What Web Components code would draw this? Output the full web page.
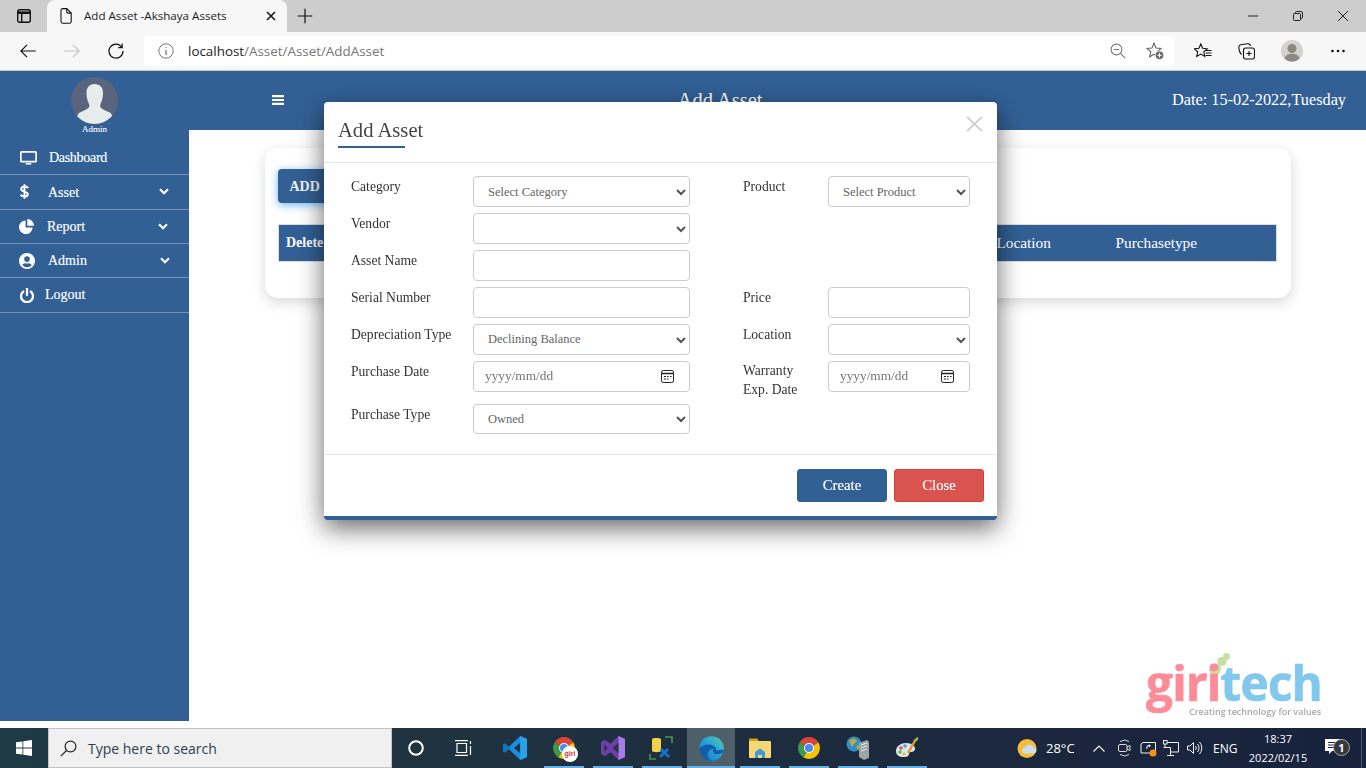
<!DOCTYPE html>
<html lang="en"><head><meta charset="utf-8"><title>Add Asset -Akshaya Assets</title>
<style>
html,body{margin:0;padding:0;height:768px;overflow:hidden;background:#fff}
body{display:flex;flex-direction:column;width:1366px}
</style></head>
<body>
<browser-chrome></browser-chrome>
<asset-app>
  <asset-modal></asset-modal>
</asset-app>
<win-taskbar></win-taskbar>
<giri-logo></giri-logo>
<script>
const def=(name,html)=>customElements.define(name,class extends HTMLElement{
  constructor(){super();this.attachShadow({mode:'open'}).innerHTML=typeof html==='function'?html(this):html;}
});
const BLUE='#326095';

def('browser-chrome',`<style>
:host{display:block;height:71px;font-family:"Open Sans","Noto Sans",sans-serif;color:#222;flex:none}
svg{display:block;flex:none}
.strip{height:32px;background:#cdcdcd;display:flex;align-items:flex-end}
.sb{margin-left:16px;width:16px;margin-right:15px;align-self:center}
.tab{width:240px;height:32px;background:#f7f7f7;border-radius:8px 8px 0 0;display:flex;align-items:center;box-sizing:border-box;padding-left:13px}
.tab .t{margin-left:12px;font-size:11.6px;width:182px;white-space:nowrap;color:#1b1b1b;margin-top:-1px}
.plus{margin-left:10px;align-self:center}
.win{margin-left:auto;display:flex;align-self:center;padding-right:18px;gap:35px}
.bar{height:38px;background:#f7f7f7;border-bottom:1px solid #c9c9c9;display:flex;align-items:center;position:relative}
.addr{position:absolute;left:144px;top:4px;width:1030px;height:30px;background:#fff;border-radius:4px;display:flex;align-items:center}
.url{font-size:13.4px;margin-left:14px;color:#767676;white-space:nowrap}
.url b{font-weight:400;color:#222}
.nav{display:flex;align-items:center;margin-left:20px;gap:28px}
.r{position:absolute;left:1194px;top:0;height:38px;display:flex;align-items:center}
</style>
<div class="strip">
 <svg class="sb" width="16" height="16" viewBox="0 0 16 16" fill="none" stroke="#111" stroke-width="1.4"><rect x="1.7" y="1.7" width="12.6" height="12.6" rx="2"/><path d="M2 4.7h12" stroke-width="2.6"/><path d="M5.7 5v9"/></svg>
 <div class="tab">
  <svg width="12" height="16" viewBox="0 0 12 16" fill="none" stroke="#111" stroke-width="1.1"><path d="M1 2.2a1.6 1.6 0 0 1 1.6-1.6h4.2L11.2 5v8.6a1.6 1.6 0 0 1-1.6 1.6h-7A1.6 1.6 0 0 1 1 13.6zM6.7.8v3a1.3 1.3 0 0 0 1.3 1.3h3"/></svg>
  <span class="t">Add Asset -Akshaya Assets</span>
  <svg width="10" height="10" viewBox="0 0 10 10" stroke="#111" stroke-width="1.5"><path d="M1 1l8 8M9 1l-8 8"/></svg>
 </div>
 <svg class="plus" width="16" height="16" viewBox="0 0 16 16" stroke="#111" stroke-width="1.2"><path d="M8 .8v14.4M.8 8h14.4"/></svg>
 <div class="win">
  <svg width="10" height="10" viewBox="0 0 10 10" stroke="#222"><path d="M0 5h10"/></svg>
  <svg width="10" height="10" viewBox="0 0 10 10" fill="none" stroke="#222"><rect x=".5" y="2.5" width="7" height="7" rx="1.2"/><path d="M2.5 2.3V1.6A1.1 1.1 0 0 1 3.6.5h4.3a1.6 1.6 0 0 1 1.6 1.6v4.3a1.1 1.1 0 0 1-1.1 1.1h-.6"/></svg>
  <svg width="10" height="10" viewBox="0 0 10 10" stroke="#222"><path d="M0 0l10 10M10 0L0 10"/></svg>
 </div>
</div>
<div class="bar">
 <div class="nav">
  <svg width="16" height="14" viewBox="0 0 16 14" fill="none" stroke="#111" stroke-width="1.2"><path d="M.8 7h15M7 .8L.8 7 7 13.2"/></svg>
  <svg width="16" height="14" viewBox="0 0 16 14" fill="none" stroke="#c4c4c4" stroke-width="1.2"><path d="M0 7h15.2M9 .8L15.2 7 9 13.2"/></svg>
  <svg width="16" height="16" viewBox="0 0 16 16" fill="none" stroke="#111" stroke-width="1.2"><path d="M13.8 4.2A7 7 0 1 0 15 8"/><path d="M14.2 .6v4h-4"/></svg>
 </div>
 <div class="addr">
  <svg style="margin-left:14px" width="16" height="16" viewBox="0 0 16 16" fill="none" stroke="#777"><circle cx="8" cy="8" r="7.2"/><path d="M8 7v5" stroke-width="1.3"/><circle cx="8" cy="4.6" r=".7" fill="#777" stroke="none"/></svg>
  <span class="url"><b>localhost</b>/Asset/Asset/AddAsset</span>
  <svg style="position:absolute;left:966px" width="16" height="16" viewBox="0 0 16 16" fill="none" stroke="#777" stroke-width="1.1"><circle cx="6.5" cy="6.5" r="5.4"/><path d="M3.8 6.5h5.4M10.4 10.4l4.8 4.8"/></svg>
  <svg style="position:absolute;left:1002px" width="18" height="18" viewBox="0 0 18 18" fill="none" stroke="#666" stroke-width="1.1"><path d="M8 1.200L10 6l5 .5-3.800 3.300 1.200 5L8 12.200l-4.400 2.600 1.200-5L1 6.500 6 6z"/><circle cx="13.500" cy="13.300" r="4.300" fill="#666" stroke="#f7f7f7" stroke-width=".8"/><path d="M13.500 11v4.600M11.200 13.300h4.600" stroke="#fff" stroke-width="1.100"/></svg>
 </div>
 <div class="r">
  <svg width="18" height="16" viewBox="0 0 18 16" fill="none" stroke="#111" stroke-width="1.1"><path d="M6.800 1l1.900 4.300 4.500.5-3.400 3 1 4.700-4-2.400-4.100 2.400 1-4.700L.4 5.800l4.500-.5z"/><path d="M11.500 7.500h6M11.800 10h5.700M11.500 12.500h6" stroke-width="1"/></svg>
  <svg style="margin-left:26px" width="17" height="17" viewBox="0 0 17 17" fill="none" stroke="#111" stroke-width="1.1"><rect x="5.500" y="5" width="11" height="11" rx="2.200"/><path d="M11 8v5M8.500 10.500h5"/><path d="M3.500 11.500C2 10 .8 6.500.8 4.500A3 3 0 0 1 3.800 1.500l6-.7a2.500 2.500 0 0 1 2.700 2.200"/></svg>
  <svg style="margin-left:26px" width="22" height="22" viewBox="0 0 22 22"><circle cx="11" cy="11" r="11" fill="#d4d2ce"/><circle cx="11" cy="8.500" r="4.500" fill="#8b8984"/><path d="M3.500 18.500C4.500 15 7.500 13.800 11 13.800s6.500 1.200 7.500 4.700A11 11 0 0 1 3.500 18.500z" fill="#8b8984"/></svg>
  <svg style="margin-left:28px" width="14" height="4" viewBox="0 0 14 4" fill="#111"><circle cx="1.500" cy="2" r="1.300"/><circle cx="7" cy="2" r="1.300"/><circle cx="12.500" cy="2" r="1.300"/></svg>
 </div>
</div>`);

const chev=c=>`<svg width="10" height="7" viewBox="0 0 10 7" fill="none" stroke="${c}" stroke-width="2.100"><path d="M1 1.200l4 4 4-4"/></svg>`;

def('nav-item',h=>`<style>
:host{display:flex;align-items:center;height:33.4px;border-bottom:1px solid rgba(255,255,255,.33);color:#fff;font:14px/1 "Liberation Serif",serif;position:relative;-webkit-text-stroke:.15px #fff}
.ic{display:flex;width:var(--ic,48px);padding-left:var(--il,20px);box-sizing:border-box}
.ch{margin-left:auto;margin-right:var(--cr,20px);display:flex}
.tx{padding-top:var(--tp,0)}
svg{display:block}
</style><span class="ic"><slot name="icon"></slot></span><span class="tx"><slot></slot></span>${h.hasAttribute('chev')?`<span class="ch">${chev('#fff')}</span>`:''}`);

def('app-sidebar',`<style>
:host{display:block;width:189px;background:${BLUE};flex:none;color:#fff;font-family:"Liberation Serif",serif}
.top{height:69.800px;display:flex;flex-direction:column;align-items:center;padding-top:6px;box-sizing:border-box}
.av{width:47px;height:47px;border-radius:50%;background:#59647f;overflow:hidden;border:0;display:block}
.nm{font-size:9px;line-height:10px;-webkit-text-stroke:.1px #fff}
</style>
<div class="top">
<svg class="av" viewBox="0 0 47 47"><path d="M23.500 7c5.800 0 8.500 3.600 8.500 9 0 3-.4 5-1 7-.6 2.400-1.800 3.800-1.800 6 0 2.600 4.500 4.300 8 5.700 3 1.200 4.300 3.700 4.300 6.300v6H6v-6c0-2.600 1.300-5.100 4.300-6.300 3.500-1.400 8-3.100 8-5.700 0-2.200-1.200-3.600-1.800-6-.6-2-1-4-1-7 0-5.400 2.700-9 8-9z" fill="#e7ecec"/></svg>
<span class="nm">Admin</span></div>
<slot></slot>`);

def('app-header',`<style>
:host{display:flex;align-items:center;height:59px;background:${BLUE};color:#fff;font-family:"Liberation Serif",serif;padding:0 20px 1px 83px;box-sizing:border-box;justify-content:space-between;flex:none}
svg{display:block}
.t{font-size:20.5px;margin-right:16px}
.d{font-size:16.3px}
</style>
<svg width="12" height="10" viewBox="0 0 12 10" fill="#fff"><rect width="12" height="2.200" rx=".5"/><rect y="3.900" width="12" height="2.200" rx=".5"/><rect y="7.800" width="12" height="2.200" rx=".5"/></svg>
<span class="t">Add Asset</span><span class="d">Date: 15-02-2022,Tuesday</span>`);

def('asset-card',`<style>
:host{display:block;margin:18px 75px 0 76px;height:150px;background:#fff;border-radius:13px;box-shadow:0 4px 14px rgba(0,0,0,.16);padding:21px 14px 0 13px;box-sizing:border-box;font-family:"Liberation Serif",serif}
button{display:block;width:130px;height:34px;background:${BLUE};color:#f2f2f2;border:0;border-radius:4px;font:600 14px "Liberation Serif",serif;text-align:left;padding:2px 0 0 11.500px;box-shadow:0 2px 9px rgba(60,160,240,.75)}
table{margin-top:21px;width:999px;height:38px;border-collapse:collapse;table-layout:fixed;border:1px solid #dcdcdc;background:${BLUE};color:#fff}
th{font:400 15.300px "Liberation Serif",serif;text-align:left;padding:0 7px;white-space:nowrap}
th.b{font-weight:700;font-size:14px}
</style>
<button>ADD</button>
<table><colgroup><col style="width:718px"><col style="width:119px"><col></colgroup>
<tr><th class="b">Delete</th><th style="padding-left:0">Location</th><th style="padding-left:0">Purchasetype</th></tr></table>`);

def('asset-app',`<style>
:host{display:flex;height:650px;flex:none;background:#fff}
.main{flex:1;display:flex;flex-direction:column;min-width:0}
.da{letter-spacing:-.3px}
</style>
<app-sidebar>
 <nav-item style="--ic:49px;--tp:1.500px"><svg slot="icon" width="17" height="15" viewBox="0 0 17 15" fill="#fff"><path d="M1.500 1h14A1.500 1.500 0 0 1 17 2.500v8.500a1.500 1.500 0 0 1-1.500 1.500h-14A1.500 1.500 0 0 1 0 11V2.500A1.500 1.500 0 0 1 1.500 1zm.2 1.700v8h13.600v-8zM6 13h5l.6 1.600H5.400z"/></svg><span class="da">Dashboard</span></nav-item>
 <nav-item chev style="--tp:1.500px"><svg slot="icon" width="9" height="15" viewBox="0 0 9 15" fill="none" stroke="#fff" stroke-width="2"><path d="M8 4.200C7.500 3 6.200 2.600 4.500 2.600 2.600 2.600 1.200 3.500 1.200 5c0 3.400 6.600 1.800 6.600 5.200 0 1.500-1.400 2.300-3.300 2.300-1.800 0-3.200-.6-3.800-1.900M4.500.3v14.400"/></svg>Asset</nav-item>
 <nav-item chev style="--ic:47px;--il:19px;--cr:21px;--tp:1.500px"><svg slot="icon" width="15" height="15" viewBox="0 0 15 15" fill="#fff"><path d="M6.600 1.500v7h7A6.800 6.800 0 1 1 6.600 1.500z"/><path d="M8.300 0a6.800 6.800 0 0 1 6.700 6.800H8.300z"/></svg>Report</nav-item>
 <nav-item chev style="--ic:48px;--il:19px;--cr:19.500px"><svg slot="icon" width="16" height="16" viewBox="0 0 16 16"><path fill="#fff" fill-rule="evenodd" d="M8 0a8 8 0 1 1 0 16A8 8 0 0 1 8 0zm0 3.300a2.800 2.800 0 1 0 0 5.600 2.800 2.800 0 0 0 0-5.600zM3.400 12.300A5.900 5.900 0 0 0 8 14.300a5.900 5.900 0 0 0 4.600-2c-.4-1.100-1.500-2-2.700-2-.6 0-1 .3-1.900.3s-1.300-.3-1.900-.3c-1.200 0-2.300.9-2.700 2z"/></svg>Admin</nav-item>
 <nav-item style="--ic:45px"><svg slot="icon" width="14" height="15" viewBox="0 0 14 15" fill="none" stroke="#fff" stroke-width="2.300"><path d="M4 2.900a6 6 0 1 0 6 0"/><path d="M7 .5v6.500" stroke-linecap="round"/></svg>Logout</nav-item>
</app-sidebar>
<div class="main"><app-header></app-header><asset-card></asset-card></div>
<slot></slot>`);

def('ui-select',`<style>
:host{display:flex;align-items:center;box-sizing:border-box;height:30.400px;border:1px solid #ccc;border-radius:4px;background:#fff;color:#666;font:12.500px "Liberation Serif",serif;padding-left:14px;padding-top:.4px;position:relative;white-space:nowrap}
:host(.first){padding-top:2px}
svg{position:absolute;right:3px;top:11.500px;display:block}
</style><slot></slot><svg width="10" height="7" viewBox="0 0 10 7" fill="none" stroke="#555" stroke-width="2"><path d="M1 1l4 4 4-4"/></svg>`);

def('ui-date',`<style>
:host{display:flex;align-items:center;justify-content:space-between;box-sizing:border-box;height:30.400px;border:1px solid #ccc;border-radius:4px;background:#fff;color:#757575;font:13.330px "Liberation Serif",serif;padding:0 15px 0 11px}
svg{display:block}
</style><slot></slot><svg width="13" height="13" viewBox="0 0 13 13" fill="none" stroke="#222"><rect x=".5" y=".5" width="12" height="12" rx="1.800"/><path d="M.5 3.500h12" stroke-width="1.500"/><path d="M3 6.500h2M6 6.500h1.500M9 6.500h1.500M3 9h2M6 9h1.500" stroke-width="1.200"/></svg>`);

def('ui-input',`<style>
:host{display:block}
input{display:block;width:100%;height:30.400px;box-sizing:border-box;border:1px solid #ccc;border-radius:4px;background:#fff;padding:0 12px;margin:0;outline:0}
</style><input type="text">`);

def('asset-form',`<style>
:host{display:grid;grid-template-columns:122px 217px 53px 85px 142px;grid-template-rows:repeat(5,30.400px) 36px 30.400px;row-gap:6.600px;padding:13.300px 0 19.700px 27px;font:13.600px/19px "Liberation Serif",serif;color:#333}
label{padding-top:1px}
.l2{grid-column:4}.c2{grid-column:5}
.l1{grid-column:1}
.w{padding-top:0}
</style>
<label class="l1">Category</label><ui-select class="first">Select Category</ui-select>
<label class="l2">Product</label><ui-select class="c2 first">Select Product</ui-select>
<label class="l1">Vendor</label><ui-select></ui-select>
<label class="l1">Asset Name</label><ui-input></ui-input>
<label class="l1">Serial Number</label><ui-input></ui-input>
<label class="l2">Price</label><ui-input class="c2"></ui-input>
<label class="l1">Depreciation Type</label><ui-select>Declining Balance</ui-select>
<label class="l2">Location</label><ui-select class="c2"></ui-select>
<label class="l1">Purchase Date</label><ui-date>yyyy/mm/dd</ui-date>
<label class="l2 w">Warranty<br>Exp. Date</label><ui-date class="c2">yyyy/mm/dd</ui-date>
<label class="l1">Purchase Type</label><ui-select>Owned</ui-select>`);

def('asset-modal',`<style>
:host{position:fixed;left:324px;top:102px;width:673px;box-sizing:border-box;background:#fff;border-radius:4px;border-bottom:4px solid ${BLUE};box-shadow:0 8px 26px rgba(0,0,0,.6);font-family:"Liberation Serif",serif;z-index:5}
.h{height:60px;box-sizing:border-box;display:flex;align-items:flex-start;justify-content:space-between;padding:14px 14px 0 14px}
.ti{font-size:20.600px;line-height:28px;color:#444;font-weight:400;margin:0;padding-bottom:4px}
.ti::after{content:"";display:block;width:67px;height:2px;background:${BLUE};margin-top:2px}
svg{display:block}
hr{border:0;border-top:1px solid #e5e5e5;margin:0}
.f{display:flex;justify-content:flex-end;gap:7px;padding:14px 13px;height:33px}
button{width:90px;height:33px;border:1px solid ${BLUE};border-radius:3px;background:${BLUE};color:#fff;font:14.700px "Liberation Serif",serif;-webkit-text-stroke:.15px #fff;padding:0}
button.c{background:#d9534f;border-color:#d43f3a}
</style>
<div class="h"><h2 class="ti">Add Asset</h2>
<svg width="17" height="16" viewBox="0 0 17 16" stroke="#ccc" stroke-width="1.800"><path d="M1 .8l15 14.400M16 .8L1 15.200"/></svg></div>
<hr><asset-form></asset-form><hr>
<div class="f"><button>Create</button><button class="c">Close</button></div>`);

def('giri-logo',`<style>
:host{position:fixed;left:1146px;top:652px;width:180px;height:70px;z-index:2;font-family:"Open Sans","Noto Sans",sans-serif}
.w{position:absolute;left:0;top:8.400px;font-size:47.500px;line-height:46px;font-weight:700;letter-spacing:-.7px;white-space:nowrap;color:#ff8b99;-webkit-text-stroke:.7px}
.w span{color:#82c7ec}
.s{position:absolute;left:43px;top:55px;font-size:9px;line-height:10px;color:#a8a8a8;font-weight:600;white-space:nowrap}
svg{position:absolute;left:58px;top:0}
</style>
<svg width="30" height="26" viewBox="0 0 30 26" fill="#c6e0a0"><circle cx="11" cy="17" r="6"/><circle cx="18" cy="9.500" r="4.600"/><circle cx="22.500" cy="4.500" r="3.500"/></svg>
<div class="w">giri<span>tech</span></div><div class="s">Creating technology for values</div>`);

const chromeSvg=`<svg width="22" height="22" viewBox="0 0 22 22"><path d="M11 11L1.500 5.500A11 11 0 0 1 20.500 5.500z" fill="#db4437"/><path d="M11 11l-9.500-5.500A11 11 0 0 0 5.500 20.500z" fill="#3a9b4a"/><path d="M11 11l9.500-5.500A11 11 0 0 1 5.500 20.500z" fill="#f4c20d"/><circle cx="11" cy="11" r="5" fill="#fff"/><circle cx="11" cy="11" r="4" fill="#4a8af4"/></svg>`;

def('win-taskbar',`<style>
:host{display:flex;align-items:center;height:40px;margin-top:7px;flex:none;background:linear-gradient(90deg,#1f3a44 0,#1f3240 35%,#1d2b3e 60%,#17223c 100%);color:#fff;font-family:"Open Sans","Noto Sans",sans-serif;position:relative}
svg{display:block}
.st{width:48px;display:flex;justify-content:center}
.se{width:344px;height:40px;box-sizing:border-box;background:#f0f0f0;border:1px solid #c2c2c2;display:flex;align-items:center;font-size:14px;padding-left:11px}
.se span{margin-left:11px;color:#2c3e50}
.ap{position:absolute;top:0;height:40px;display:flex;align-items:center;justify-content:center;box-sizing:border-box}
.ap.u::after{content:"";position:absolute;left:0;right:0;bottom:0;height:2px;background:#67b0e6}
.act{background:#4d5f69}
.tr{position:absolute;top:0;height:40px;display:flex;align-items:center;font-size:12.500px;white-space:nowrap;justify-content:center}
.ck{flex-direction:column;line-height:19px;font-size:11px;justify-content:center}
.sepr{position:absolute;left:1361px;top:0;bottom:0;width:1px;background:#4a5568}
</style>
<div class="st"><svg width="16" height="16" viewBox="0 0 16 16" fill="#fff"><path d="M0 2.300l6.500-.9v6.200H0zM7.300 1.300L16 0v7.600H7.300zM0 8.400h6.500v6.200L0 13.700zM7.300 8.400H16V16l-8.700-1.300z"/></svg></div>
<div class="se"><svg width="17" height="17" viewBox="0 0 17 17" fill="none" stroke="#222" stroke-width="1.200"><circle cx="10.500" cy="6.500" r="5.400"/><path d="M6.500 10.500L.8 16.200"/></svg><span>Type here to search</span></div>
<div class="ap" style="left:392px;width:48px"><svg width="16" height="16" viewBox="0 0 16 16" fill="none" stroke="#fff" stroke-width="2"><circle cx="8" cy="8" r="6.800"/></svg></div>
<div class="ap" style="left:440px;width:48px"><svg width="18" height="16" viewBox="0 0 18 16" fill="none" stroke="#fff" stroke-width="1.200"><path d="M0 .6h13M0 15.400h13M2 3.500h9.500v9H2zM15.500 1v3M15.500 6v9"/></svg></div>
<div class="ap" style="left:491px;width:48px"><svg width="24" height="24" viewBox="0 0 24 24"><path d="M17.300 0L24 3v18l-6.700 3L6 13.300 1.800 16.500 0 15.500v-7l1.800-1L6 10.700zM17.300 6.700L11 12l6.300 5.300z" fill="#1b8ee0"/><path d="M17.300 0L24 3v18l-6.700 3z" fill="#27a4ee"/><path d="M6 10.700L1.800 7.500 0 8.500v7l1.800 1L6 13.300l2.500-1.300z" fill="#0d76bf"/></svg></div>
<div class="ap u" style="left:544px;width:40px"><span style="position:relative;display:block;width:22px;height:22px">${chromeSvg}<svg style="position:absolute;left:9px;top:9px" width="16" height="16"><circle cx="8" cy="8" r="8" fill="#fff"/><text x="8" y="10" font-size="7" font-weight="700" fill="#d33" text-anchor="middle" font-family="Liberation Sans">giri</text></svg></span></div>
<div class="ap u" style="left:593px;width:40px"><svg width="24" height="24" viewBox="0 0 24 24"><path d="M17.500 0L24 3v18l-6.500 3-8-7.700-5.500 3.900L0 18V6l4 -2.200 5.500 3.900z" fill="#6c3fa8"/><path d="M17.500 0L24 3v18l-6.500 3z" fill="#a67ce6"/><path d="M17.500 6.800L11.700 12l5.800 5.200zM3.300 8.600v6.800L6.700 12z" fill="#2a3140"/></svg></div>
<div class="ap u" style="left:642px;width:40px"><svg width="26" height="24" viewBox="0 0 26 24"><path d="M3 3c0-1.500 9-1.500 9 0v12c0 1.500-9 1.500-9 0z" fill="#f1d24a"/><path d="M16 1h7v6M1 18v5h6" fill="none" stroke="#3d9a3e" stroke-width="1.700"/><path d="M11 21l8-8M20 21l-8-8" stroke="#1573c9" stroke-width="3"/></svg></div>
<div class="ap u act" style="left:687px;width:48px"><svg width="25" height="25" viewBox="0 0 25 25"><defs><linearGradient id="e1" x1="0" y1="1" x2="1" y2="0"><stop offset="0" stop-color="#0b79d0"/><stop offset=".6" stop-color="#2aa7d8"/><stop offset="1" stop-color="#5dd39a"/></linearGradient></defs><circle cx="12.500" cy="12.500" r="12.300" fill="url(#e1)"/><path d="M24.800 14.500c0 2-2.500 3.700-5.800 3.700-4 0-5.200-2-5.200-3.500 0-1.300 1-2 1-2-3.500 0-6.300 3-6.300 6 0 2.500 1.600 5 4.500 6C7 25 1 20.500.2 13c2-3 5.300-4.500 8.800-4.500 5 0 8 2.500 8 5 0 .4 0 1 2 1 2 0 5.800-1.500 5.800 0z" fill="#0f5fa8"/></svg></div>
<div class="ap u" style="left:740px;width:40px"><svg width="22" height="20" viewBox="0 0 22 20"><path d="M0 1.500A1 1 0 0 1 1 .5h7l2 2.500H0z" fill="#d9a21b"/><path d="M0 3h21a1 1 0 0 1 1 1v15a1 1 0 0 1-1 1H1a1 1 0 0 1-1-1z" fill="#f7d774"/><path d="M6 20v-6l5-3.500 5 3.500v6h-3v-3H9v3z" fill="#3e9ae0"/></svg></div>
<div class="ap u" style="left:789px;width:40px">${chromeSvg}</div>
<div class="ap u" style="left:838px;width:40px"><svg width="24" height="24" viewBox="0 0 24 24"><circle cx="8" cy="8" r="7.500" fill="#2e8fc9"/><path d="M3 5l5-3 3 3-3 3-2 3zM10 10l4-1 1 3-3 2z" fill="#c0a83a"/><path d="M13 7l8-3 2 2v16l-5 2-5-3z" fill="#9ca4a4"/><path d="M15 9l6-2M15 12l6-2M15 15l6-2" stroke="#e9eded" stroke-width="1"/></svg></div>
<div class="ap u" style="left:887px;width:40px"><svg width="24" height="24" viewBox="0 0 24 24"><path d="M1 15c0-5 5-8 10-8 6 0 9 3 9 6 0 2-2 3-4 3s-2 1-2 2-1 3-5 3c-5 0-8-2-8-6z" fill="#dbe9ee"/><circle cx="6" cy="12" r="1.800" fill="#d9534f"/><circle cx="10" cy="10" r="1.800" fill="#4a9ed6"/><circle cx="5" cy="16" r="1.800" fill="#6cb33f"/><circle cx="9" cy="18" r="1.500" fill="#e8b92f"/><path d="M13 17L21 3" stroke="#e09a2f" stroke-width="2.500"/><path d="M20 4l2-3 1.500 1-1.500 3z" fill="#b8b09c"/></svg></div>
<div class="tr" style="left:1017px"><svg width="21" height="21" viewBox="0 0 21 21"><circle cx="10" cy="10.500" r="9.500" fill="#f5bc3a"/><path d="M8 15.500a3 3 0 0 1 .3-6 4.200 4.200 0 0 1 8-.3 3.200 3.200 0 0 1 .7 6.300z" fill="#c9dff0"/></svg></div>
<div class="tr" style="left:1046px;font-size:13px">28°C</div>
<div class="tr" style="left:1093px"><svg width="12" height="7" viewBox="0 0 12 7" fill="none" stroke="#fff" stroke-width="1.100"><path d="M.5 6.500L6 1l5.500 5.500"/></svg></div>
<div class="tr" style="left:1118px"><svg width="13" height="18" viewBox="0 0 13 18" fill="none" stroke="#ddd"><path d="M2 2.500Q6.500-.5 11 2.500M2 15.500q4.500 3 9 0"/><rect x=".5" y="5.500" width="8.500" height="7" rx="1.500"/><path d="M9 8l3-1.500v5L9 10"/></svg></div>
<div class="tr" style="left:1140px"><svg width="17" height="18" viewBox="0 0 17 18" fill="none" stroke="#eee"><path d="M3 3.500h12.500V12H13M1 5l2-1.500M1 5v9h9"/><path d="M7 10a2.500 2.500 0 0 1 3-3.500M9 6l1 1-1.200.8" stroke-width="1.100"/><circle cx="13" cy="14" r="3.500" fill="#f6920f" stroke="none"/></svg></div>
<div class="tr" style="left:1163px"><svg width="16" height="16" viewBox="0 0 16 16" fill="none" stroke="#eee"><rect x=".5" y=".5" width="3.500" height="3.500"/><path d="M2 4v3.500h-1.500M4 2.500h11.500v9.500H7.500M2 7.500h5.500V12M7.500 12v3M4 15.500h7"/></svg></div>
<div class="tr" style="left:1187px"><svg width="16" height="14" viewBox="0 0 16 14" fill="none" stroke="#eee"><path d="M.5 5v4h2.500l3.500 3.500V1.500L3 5zM8.500 5a3 3 0 0 1 0 4M10.500 3a6 6 0 0 1 0 8M12.500 1a9 9 0 0 1 0 12"/></svg></div>
<div class="tr" style="left:1213px;font-size:12px">ENG</div>
<div class="tr ck" style="left:1240px;width:76px"><span>18:37</span><span>2022/02/15</span></div>
<div class="tr" style="left:1325px"><svg width="17" height="15" viewBox="0 0 17 15" fill="#fff" style="margin-top:-4px"><path d="M0 0h17v12H7l-3 3v-3H0z"/><path d="M3 3.500h11M3 6h11M3 8.500h11" stroke="#1b2740"/></svg></div>
<div class="tr" style="left:1333px;top:11px;height:auto"><span style="display:flex;width:15px;height:15px;border:1.500px solid #a9a9a9;border-radius:50%;background:#34383f;align-items:center;justify-content:center;font-size:11px;font-weight:700;line-height:1">1</span></div>
<div class="sepr"></div>`);
</script>
</body></html>
